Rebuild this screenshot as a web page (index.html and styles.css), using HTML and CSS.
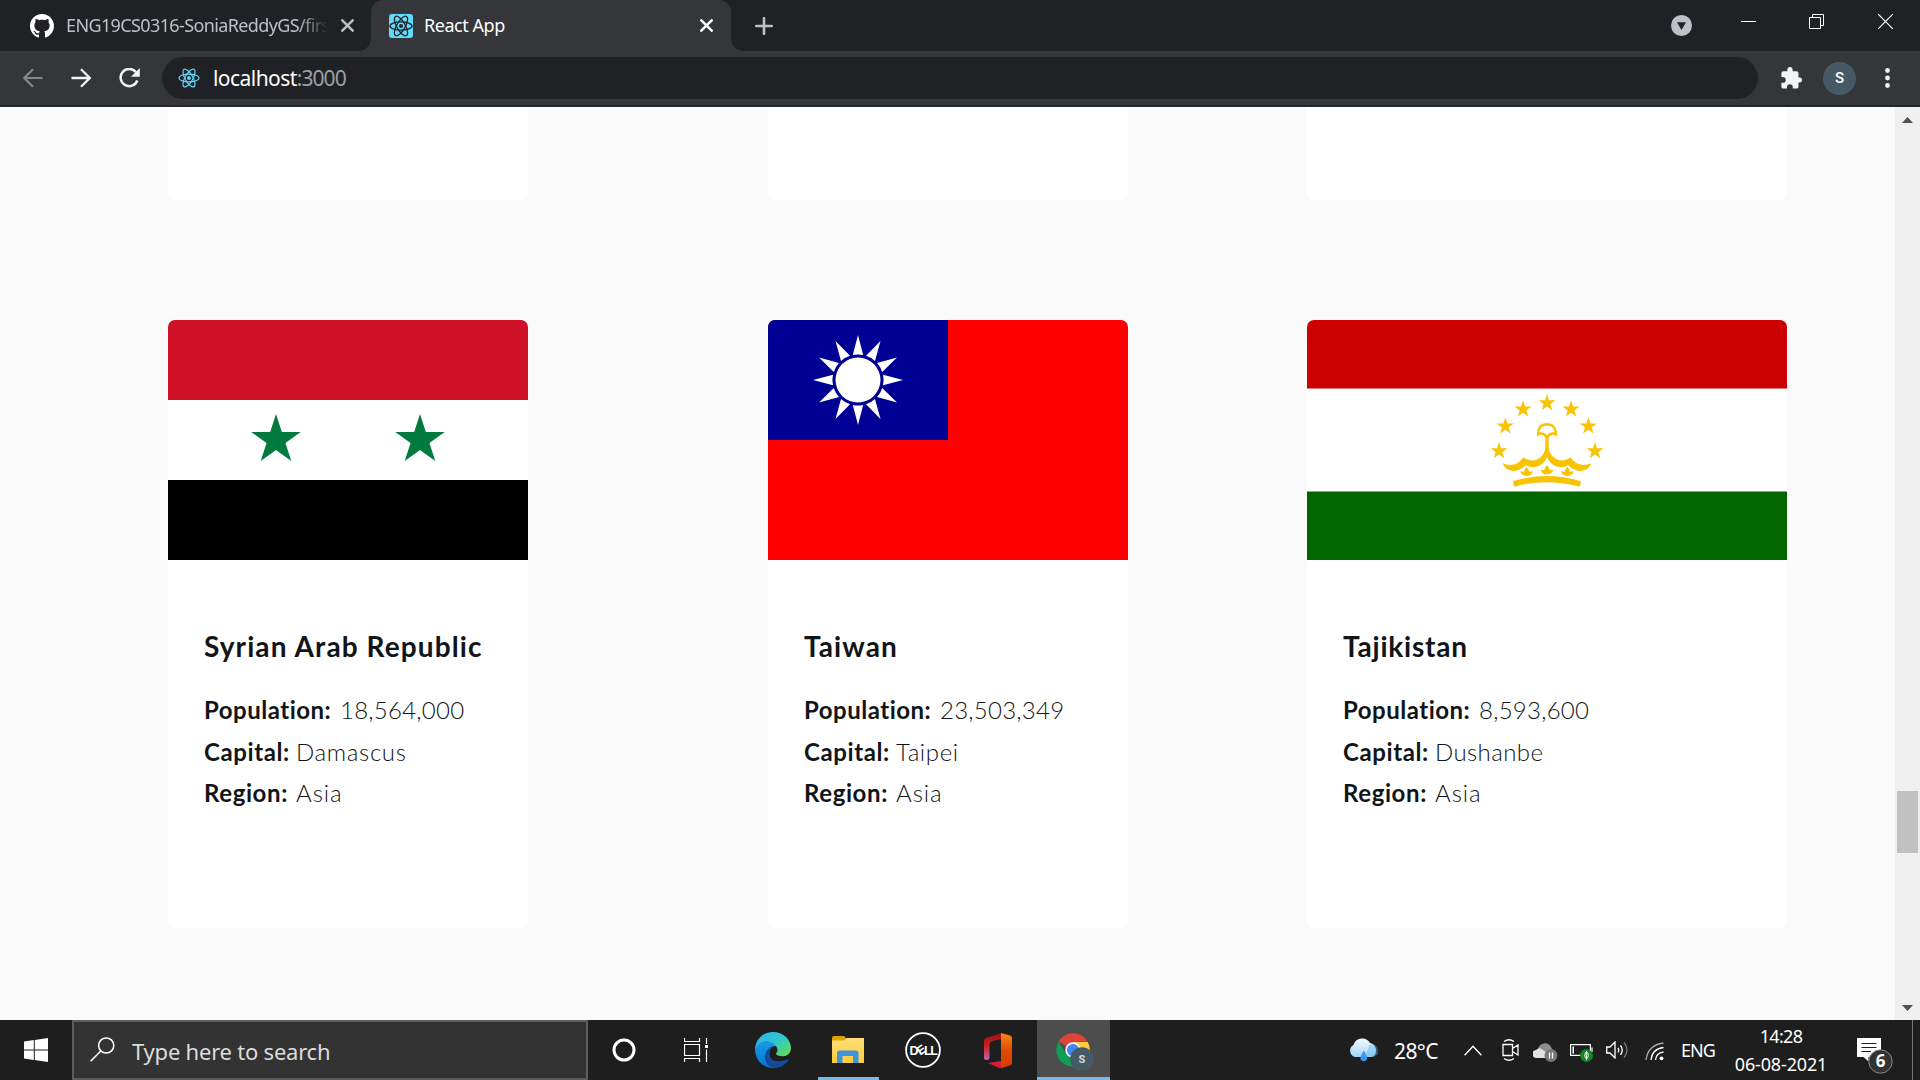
FILE: index.html
```html
<!DOCTYPE html>
<html lang="en">
<head>
<meta charset="utf-8">
<title>React App</title>
<link rel="stylesheet" href="styles.css">
</head>
<body>
<svg class="defs" aria-hidden="true">
  <defs>
    <symbol id="react" viewBox="0 0 24 24"><g fill="none" stroke="currentColor" stroke-width="1.3"><ellipse cx="12" cy="12" rx="11" ry="4.2"/><ellipse cx="12" cy="12" rx="11" ry="4.2" transform="rotate(60 12 12)"/><ellipse cx="12" cy="12" rx="11" ry="4.2" transform="rotate(120 12 12)"/></g><circle cx="12" cy="12" r="2.1" fill="currentColor"/></symbol>
    <symbol id="x" viewBox="0 0 12 12"><path d="M1.2 1.2 10.8 10.8M10.8 1.2 1.2 10.8" stroke="currentColor" stroke-width="2.3" stroke-linecap="round"/></symbol>
    <path id="star" d="M0-1 .2245-.309H.951L.363.118.588.809 0 .382-.588.809-.363.118-.951-.309H-.2245Z"/>
    <path id="ray" d="M0-45 5.200-25Q0-26.2-5.200-25Z"/>
    <path id="leaf" d="M-19-1Q-10-1-8 1-7-8 0-15 7-8 8 1 10-1 19-1 15 13 0 13-15 13-19-1Z"/>
    <linearGradient id="edgeTop" x1="0" y1="0" x2="1" y2="1"><stop offset="0" stop-color="#2fb4f0"/><stop offset=".5" stop-color="#2fc6cf"/><stop offset="1" stop-color="#6be03c"/></linearGradient>
    <linearGradient id="edgeLow" x1="0" y1="0" x2="0" y2="1"><stop offset="0" stop-color="#1b9de2"/><stop offset="1" stop-color="#0672cf"/></linearGradient>
    <linearGradient id="cloud" x1="0" y1="0" x2="0" y2="1"><stop offset="0" stop-color="#f2faff"/><stop offset="1" stop-color="#a5d5f5"/></linearGradient>
    <linearGradient id="officeR" x1="0" y1="0" x2="0" y2="1"><stop offset="0" stop-color="#f58a10"/><stop offset=".5" stop-color="#e04a05"/><stop offset="1" stop-color="#d43c00"/></linearGradient>
    <linearGradient id="officeL" x1="0" y1="0" x2="0" y2="1"><stop offset="0" stop-color="#9a0f10"/><stop offset=".5" stop-color="#cf2222"/><stop offset="1" stop-color="#b965b5"/></linearGradient>
    <linearGradient id="folder" x1="0" y1="0" x2="0" y2="1"><stop offset="0" stop-color="#ffdf78"/><stop offset="1" stop-color="#ffcb3d"/></linearGradient>
  </defs>
</svg>

<header class="tabs">
  <div class="tab tab-idle">
    <svg class="github" viewBox="0 0 16 16"><path fill="#fff" d="M8 0C3.58 0 0 3.58 0 8c0 3.54 2.29 6.53 5.47 7.59.4.07.55-.17.55-.38 0-.19-.01-.82-.01-1.49-2.01.37-2.53-.49-2.69-.94-.09-.23-.48-.94-.82-1.13-.28-.15-.68-.52-.01-.53.63-.01 1.08.58 1.23.82.72 1.21 1.87.87 2.33.66.07-.52.28-.87.51-1.07-1.78-.2-3.64-.89-3.64-3.95 0-.87.31-1.59.82-2.15-.08-.2-.36-1.02.08-2.12 0 0 .67-.21 2.2.82.64-.18 1.32-.27 2-.27s1.36.09 2 .27c1.53-1.04 2.2-.82 2.2-.82.44 1.1.16 1.92.08 2.12.51.56.82 1.27.82 2.15 0 3.07-1.87 3.75-3.65 3.95.29.25.54.73.54 1.48 0 1.07-.01 1.93-.01 2.2 0 .21.15.46.55.38A8.01 8.01 0 0 0 16 8c0-4.42-3.58-8-8-8z"/></svg>
    <span class="tab-title idle-title">ENG19CS0316-SoniaReddyGS/firs</span>
    <svg class="tab-x"><use href="#x"/></svg>
  </div>
  <div class="tab tab-active">
    <span class="favicon"><svg><use href="#react"/></svg></span>
    <span class="tab-title active-title">React App</span>
    <svg class="tab-x"><use href="#x"/></svg>
  </div>
  <svg class="plus" viewBox="0 0 18 18"><path d="M9 1.2V16.8M1.2 9H16.8" stroke="#bdc1c6" stroke-width="2.6" stroke-linecap="round"/></svg>
  <div class="window-buttons">
    <svg class="tab-search" viewBox="0 0 21 21"><circle cx="10.5" cy="10.5" r="10.5" fill="#bdc1c6"/><path d="M6 7.2H15L10.500 15Z" fill="#202124"/></svg>
    <svg class="win-min" viewBox="0 0 15 15"><path d="M0 7.500H15" stroke="#fff"/></svg>
    <svg class="win-max" viewBox="0 0 15 15"><path d="M.5 3.500H11.500V14.500H.5ZM3.500 3V.5H14.500V11.500H12" fill="none" stroke="#fff"/></svg>
    <svg class="win-close" viewBox="0 0 15 15"><path d="M0 0 15 15M15 0 0 15" stroke="#fff" stroke-width="1.2"/></svg>
  </div>
</header>

<nav class="toolbar">
  <svg class="nav-back" viewBox="0 0 20 20"><path d="M19.500 10H1.500M10 1.200 1.200 10 10 18.800" fill="none" stroke="#87898c" stroke-width="2.1"/></svg>
  <svg class="nav-fwd" viewBox="0 0 20 20"><path d="M.5 10H18.500M10 1.200 18.800 10 10 18.800" fill="none" stroke="#f1f3f4" stroke-width="2.300"/></svg>
  <svg class="nav-reload" viewBox="0 0 21 20"><path d="M17 4.200A8.600 8.600 0 1 0 18.300 12.500" fill="none" stroke="#f1f3f4" stroke-width="2.500"/><path d="M20.800 0V8.700H12Z" fill="#f1f3f4"/></svg>
  <div class="omnibox">
    <svg><use href="#react"/></svg>
    <span class="url">localhost<span class="port">:3000</span></span>
  </div>
  <svg class="puzzle" viewBox="0 0 22 22"><path fill="#f1f3f4" d="M19 10.500H17.500V6.300Q17.500 4.300 15.500 4.300H11.600V2.700A2.600 2.600 0 0 0 6.400 2.700V4.300H2.300Q.4 4.300.4 6.200V10H1.800A2.900 2.900 0 0 1 1.800 15.800H.4V19.700Q.4 21.600 2.300 21.600H6V20.200A2.900 2.900 0 0 1 11.800 20.200V21.600H15.600Q17.500 21.600 17.500 19.700V15.600H19A2.600 2.600 0 0 0 19 10.500Z"/></svg>
  <span class="avatar">S</span>
  <svg class="dots" viewBox="0 0 5 20"><g fill="#f1f3f4"><circle cx="2.500" cy="2.500" r="2.400"/><circle cx="2.500" cy="10" r="2.400"/><circle cx="2.500" cy="17.500" r="2.400"/></g></svg>
</nav>

<div class="viewport">
  <main class="countries">
    <article class="card card-cut"></article>
    <article class="card card-cut"></article>
    <article class="card card-cut card-wide"></article>

    <article class="card">
      <svg class="flag" viewBox="0 0 360 240"><path fill="#ce1126" d="M0 0H360V80H0Z"/><path fill="#fff" d="M0 80H360V160H0Z"/><path d="M0 160H360V240H0Z"/><g fill="#007a3d"><use href="#star" transform="translate(108 120) scale(26)"/><use href="#star" transform="translate(252 120) scale(26)"/></g></svg>
      <div class="info">
        <h2 class="t-syria">Syrian Arab Republic</h2>
        <p><b class="k-pop">Population:</b><span class="v-num">18,564,000</span></p>
        <p><b class="k-cap">Capital:</b><span class="v-damascus">Damascus</span></p>
        <p><b class="k-reg">Region:</b><span class="v-asia">Asia</span></p>
      </div>
    </article>

    <article class="card">
      <svg class="flag" viewBox="0 0 360 240"><path fill="#f00" d="M0 0H360V240H0Z"/><path fill="#000095" d="M0 0H180V120H0Z"/><g transform="translate(90 60)" fill="#fff"><circle r="22.500"/><use href="#ray"/><use href="#ray" transform="rotate(30)"/><use href="#ray" transform="rotate(60)"/><use href="#ray" transform="rotate(90)"/><use href="#ray" transform="rotate(120)"/><use href="#ray" transform="rotate(150)"/><use href="#ray" transform="rotate(180)"/><use href="#ray" transform="rotate(210)"/><use href="#ray" transform="rotate(240)"/><use href="#ray" transform="rotate(270)"/><use href="#ray" transform="rotate(300)"/><use href="#ray" transform="rotate(330)"/></g></svg>
      <div class="info">
        <h2 class="t-taiwan">Taiwan</h2>
        <p><b class="k-pop">Population:</b><span class="v-num">23,503,349</span></p>
        <p><b class="k-cap">Capital:</b><span class="v-taipei">Taipei</span></p>
        <p><b class="k-reg">Region:</b><span class="v-asia">Asia</span></p>
      </div>
    </article>

    <article class="card card-wide">
      <svg class="flag" viewBox="0 0 480 240"><path fill="#fff" d="M0 0H480V240H0Z"/><path fill="#c00" d="M0 0H480V68.570H0Z"/><path fill="#060" d="M0 171.430H480V240H0Z"/>
        <g transform="translate(153 50) scale(.33333)" fill="#f8c300">
          <use href="#star" transform="translate(261 99) scale(27)"/><use href="#star" transform="translate(189 118) scale(27)"/><use href="#star" transform="translate(333 118) scale(27)"/><use href="#star" transform="translate(136 169) scale(27)"/><use href="#star" transform="translate(385 169) scale(27)"/><use href="#star" transform="translate(117 243) scale(27)"/><use href="#star" transform="translate(405 243) scale(27)"/>
          <path d="M231 201C229 172 241 159 261 159S293 172 291 201C284 192 274 192 266 203V235C270 262 300 285 332 262C350 290 378 287 393 280C388 304 350 314 325 286C300 300 272 288 261 262C250 288 222 300 197 286C172 314 134 304 129 280C144 287 172 290 190 262C222 285 252 262 256 235V203C248 192 238 192 231 201ZM238 187C248 185 255 189 261 196C267 189 274 185 284 187C281 171 274 167 261 167S241 171 238 187Z" fill-rule="evenodd"/>
          <use href="#leaf" transform="translate(200 305)"/><use href="#leaf" transform="translate(261 300)"/><use href="#leaf" transform="translate(322 305)"/>
          <path d="M159 334Q261 302 363 334L360 350Q261 323 162 350Z"/>
        </g></svg>
      <div class="info">
        <h2 class="t-tajik">Tajikistan</h2>
        <p><b class="k-pop">Population:</b><span class="v-num">8,593,600</span></p>
        <p><b class="k-cap">Capital:</b><span class="v-dushanbe">Dushanbe</span></p>
        <p><b class="k-reg">Region:</b><span class="v-asia">Asia</span></p>
      </div>
    </article>
  </main>
  <aside class="scrollbar">
    <svg viewBox="0 0 11 6"><path d="M5.500 0 11 6H0Z" fill="#505050"/></svg>
    <div class="thumb"></div>
    <svg viewBox="0 0 11 6"><path d="M0 0H11L5.500 6Z" fill="#505050"/></svg>
  </aside>
</div>

<footer class="taskbar">
  <div class="slot"><svg width="24" height="24" viewBox="0 0 24 24"><path fill="#fff" d="M0 3.400 9.800 2V11.400H0ZM10.800 1.900 24 0V11.400H10.800ZM0 12.400H9.800V22L0 20.600ZM10.800 12.400H24V24L10.800 22.100Z"/></svg></div>
  <div class="search">
    <svg width="25" height="25" viewBox="0 0 25 25"><circle cx="16.200" cy="8.500" r="7.600" fill="none" stroke="#fff" stroke-width="1.500"/><path d="M10.800 14 .6 24.300" stroke="#fff" stroke-width="1.600"/></svg>
    <span>Type here to search</span>
  </div>
  <div class="slot"><svg width="24" height="24" viewBox="0 0 24 24"><circle cx="12" cy="12" r="10" fill="none" stroke="#fff" stroke-width="3"/></svg></div>
  <div class="slot"><svg width="24" height="24" viewBox="0 0 24 24"><path d="M.5 0V3.500H15.500V0M.5 6.500H15.500V17.500H.5ZM.5 24V20.500H15.500V24M22.500 0V6M22.500 11.500V24" fill="none" stroke="#fff" stroke-width="1.200"/><path d="M21 7H24V10H21Z" fill="#fff"/></svg></div>
  <div class="slot app app-first"><svg width="36" height="36" viewBox="0 0 36 36"><path fill="url(#edgeLow)" d="M0 17C1 7 17 5 22 14 15 13 13 20 15 26 17 32 24 35 29 32 25 35 21 36 18 36 8 36 0 28 0 17Z"/><path fill="#124b9a" d="M17 14C12 19 14 28 21 29 26 30 30 28 33 27 34 27 34 28 33 29 29 34 24 36 19 36 9 35 6 20 17 14Z"/><path fill="url(#edgeTop)" d="M0 17C1 6 9 0 18 0 29 0 36 8 36 16 36 22 31 25 26 24 21 24 20 22 22 20 24 17 20 10 12 9 6 9 2 12 0 17Z"/></svg></div>
  <div class="slot app app-open"><svg width="32" height="28" viewBox="0 0 32 28"><path fill="#e0a100" d="M0 2Q0 0 2 0H12L15 3V7H0Z"/><path fill="url(#folder)" d="M0 4.500H12L15 2H32V27H0Z"/><path fill="#3c96dd" d="M5 27V17Q5 14.500 8 14.500H24Q26.500 14.500 26.500 17V27H21V20H10.500V27Z"/></svg></div>
  <div class="slot app"><svg width="36" height="36" viewBox="0 0 36 36"><circle cx="18" cy="18" r="16.900" fill="none" stroke="#fff" stroke-width="1.800"/><g class="dell"><text x="4.500" y="22.500">D</text><text x="12" y="22.300" transform="rotate(-35 16 18)">E</text><text x="19" y="22.500">L</text><text x="25.300" y="22.500">L</text></g></svg></div>
  <div class="slot app"><svg width="28" height="35" viewBox="0 0 28 35"><path fill="url(#officeL)" d="M17 0 2 5Q0 6 0 8V26Q2 28 5.500 26V11Q6 9 8 8L17 6Z"/><path fill="#d91d35" d="M4 30 17 28 28 31 19 34.500Q16 35.500 14 34.500Z"/><path fill="url(#officeR)" d="M17 0 26 2.500Q28 3 28 5V30Q28 32 26 32.500L17 35Z"/></svg></div>
  <div class="slot app app-active"><svg width="38" height="38" viewBox="0 0 38 38"><path fill="#db4437" d="M17 17 2.600 8.700A16.600 16.600 0 0 1 31.400 8.700L17 9Z"/><path fill="#ffcd40" d="M17 9H31.700A16.600 16.600 0 0 1 17 33.600L24 21Z"/><path fill="#0f9d58" d="M2.600 8.700 10 21 24 21 17 33.600A16.600 16.600 0 0 1 2.600 8.700Z"/><circle cx="17" cy="17" r="7.800" fill="#f1f1f1"/><circle cx="17" cy="17" r="6" fill="#4285f4"/><circle cx="26" cy="26" r="11.800" fill="#455a64"/><text class="badge-letter" x="26" y="30">S</text></svg></div>

  <div class="tray">
    <svg class="weather" viewBox="0 0 31 24"><path fill="url(#cloud)" d="M7 19A6.500 6.500 0 0 1 5.500 7 9 9 0 0 1 22 5 7.500 7.500 0 0 1 24 19Z"/><path fill="#5cb3f2" opacity=".4" d="M11 19Q20 17 21 7 26 5 29 9 33 18 24 19Z"/><path fill="#3b96ed" d="M15.800 12.500Q12 19 12.500 20.500A3.300 3.300 0 0 0 19 20.500Q19.500 19 15.800 12.500Z"/></svg>
    <span class="temp">28°C</span>
    <svg class="chev" viewBox="0 0 18 11"><path d="M.6 10.300 9 1.200 17.400 10.300" fill="none" stroke="#fff" stroke-width="1.400"/></svg>
    <svg class="meet" viewBox="0 0 17 22"><path d="M1 5.500H10.500V16.500H1ZM10.500 9.500 16 6V16L10.500 12.500M2 2.500Q7 -1 12 2.500M2 19.500Q7 23 12 19.500" fill="none" stroke="#fff" stroke-width="1.300"/></svg>
    <svg class="drive" viewBox="0 0 25 20"><path fill="#8d8d8d" d="M5 7A7 7 0 0 1 18 5Q20 7 19 13H6Z"/><path fill="#e2e2e2" d="M4 16A4 4 0 0 1 3 8Q7 4 11 9L18 12V16Z"/><circle cx="18" cy="13.500" r="6.500" fill="#777"/><path d="M16.500 10.500V16.500M19.500 10.500V16.500" stroke="#fff" stroke-width="1.300"/></svg>
    <svg class="battery" viewBox="0 0 24 19"><path d="M.6 1.600H20.400V12.400H.6ZM22 4.500V9" fill="none" stroke="#fff" stroke-width="1.200"/><path d="M2.500 3.500H4V10.500H2.500Z" fill="#fff"/><circle cx="16.500" cy="12.500" r="6.400" fill="#0f8a1c"/><path d="M16.500 8.500Q20 12.500 16.500 16 13 12.500 16.500 8.500ZM16.500 8.500V17" fill="none" stroke="#fff"/></svg>
    <svg class="volume" viewBox="0 0 23 18"><path d="M.7 6H4L9 1V17L4 12H.7Z" fill="none" stroke="#fff" stroke-width="1.300"/><path d="M12 7Q13.500 9 12 11.500M14.500 4.500Q18 9 14.500 14" fill="none" stroke="#fff" stroke-width="1.300"/><path d="M18 1.500Q24 9 18 16.500" fill="none" stroke="#777" stroke-width="1.300"/></svg>
    <svg class="wifi" viewBox="0 0 19 19"><g fill="none" stroke="#fff" stroke-width="1.300"><path d="M10.500 18Q11 11 18.500 10"/><path d="M6 18Q7 7 18.500 5.500"/><path d="M1 18Q3 3 18.500 1" stroke="#aaa"/></g><circle cx="16.500" cy="16.300" r="1.900" fill="#fff"/></svg>
    <span class="lang">ENG</span>
    <div class="clock"><span class="time">14:28</span><span class="date">06-08-2021</span></div>
    <svg class="notes" viewBox="0 0 36 36"><path fill="#fff" d="M0 0H24V19H11.500V23.500L6.500 19H0Z"/><path d="M4.500 5.500H19.500M4.500 9.500H19.500M4.500 13.500H14" stroke="#1e1e1e" stroke-width="1.200"/><circle cx="23.500" cy="23.500" r="11.700" fill="#333" stroke="#888"/><text x="23.500" y="29.300">6</text></svg>
    <span class="peek"></span>
  </div>
</footer>
</body>
</html>
```
FILE: styles.css
```css
* { box-sizing: border-box; }
body {
  margin: 0;
  width: 1920px;
  height: 1080px;
  overflow: hidden;
  display: flex;
  flex-direction: column;
  background: #fafafa;
  font-family: "Noto Sans", sans-serif;
}
svg { display: block; flex: none; }
.defs { width: 0; height: 0; position: absolute; }

/* Tab strip */
.tabs { height: 51px; flex: none; display: flex; align-items: flex-start; background: #202124; color: #fff; }
.tab { height: 51px; display: flex; align-items: center; }
.tab-idle { width: 371px; padding-left: 30px; color: #bdc1c6; }
.github { width: 24px; height: 24px; }
.tab-title { font-size: 18px; line-height: 24px; white-space: nowrap; letter-spacing: -0.620px; margin-top: -1px; }
.idle-title { width: 266px; margin-left: 12px; -webkit-mask-image: linear-gradient(90deg, #000 232px, transparent 262px); mask-image: linear-gradient(90deg, #000 232px, transparent 262px); }
.active-title { letter-spacing: -0.450px; }
.tab-x { width: 13px; height: 13px; margin-left: 9px; }
.tab-active { position: relative; width: 360px; padding: 0 18px; background: #35363a; border-radius: 12px 12px 0 0; }
.tab-active::before, .tab-active::after { content: ""; position: absolute; bottom: 0; width: 12px; height: 12px; }
.tab-active::before { left: -12px; background: radial-gradient(circle at 0 0, #202124 11.500px, #35363a 12px); }
.tab-active::after { right: -12px; background: radial-gradient(circle at 100% 0, #202124 11.500px, #35363a 12px); }
.tab-active .tab-x { margin-left: auto; }
.favicon { width: 24px; height: 24px; border-radius: 3px; background: #61dafb; color: #20232a; margin-right: 11px; }
.favicon svg { width: 24px; height: 24px; }
.plus { width: 18px; height: 18px; margin: 16.500px 0 0 23.500px; }
.window-buttons { margin-left: auto; display: flex; align-items: flex-start; padding: 14px 27px 0 0; }
.window-buttons svg { width: 15px; height: 15px; }
.window-buttons .tab-search { width: 21px; height: 21px; margin-top: 1px; }
.win-min { margin-left: 49px; }
.win-max { margin-left: 53px; }
.win-close { margin-left: 54px; }

/* Address bar */
.toolbar { height: 56px; flex: none; display: flex; align-items: center; background: #35363a; border-bottom: 2px solid #26272a; padding-left: 23px; }
.nav-back, .nav-fwd { width: 20px; height: 20px; }
.nav-fwd { margin-left: 28px; }
.nav-reload { width: 21px; height: 20px; margin-left: 28px; }
.omnibox { width: 1596px; height: 42px; margin-left: 22px; padding-left: 16px; display: flex; align-items: center; background: #202124; border-radius: 21px; color: #61dafb; }
.omnibox svg { width: 22px; height: 22px; }
.url { margin-left: 13px; font-size: 21px; letter-spacing: -0.550px; color: #fff; }
.port { color: #9aa0a6; letter-spacing: -0.950px; }
.puzzle { width: 22px; height: 22px; margin: -1px 0 0 23px; }
.avatar { width: 33px; height: 33px; margin-left: 20px; border-radius: 50%; background: #455a64; color: #fff; font: 500 15px/33px Roboto, sans-serif; text-align: center; }
.dots { width: 5px; height: 20px; margin-left: 28.500px; }

/* Page */
.viewport { flex: 1; display: flex; background: #fafafa; overflow: hidden; }
.countries { flex: 1; display: grid; grid-template-columns: 600px 539px 480px; grid-template-rows: 93px 608px; row-gap: 120px; padding-left: 168px; }
.card { width: 360px; background: #fff; border-radius: 7px; overflow: hidden; color: #111517; font-family: Lato, sans-serif; font-variant-ligatures: none; }
.card-wide { width: 480px; }
.card-cut { border-radius: 0 0 7px 7px; }
.flag { width: 100%; height: 240px; }
.info { padding: 68px 36px 0; }
.info h2 { margin: 0 0 25px; font-size: 28px; line-height: 36px; font-weight: 700; white-space: nowrap; }
.info p { margin: 0; display: flex; font-size: 24px; line-height: 41.600px; font-weight: 300; white-space: nowrap; }
.info b { font-weight: 700; letter-spacing: 0.600px; }
.k-pop { width: 136px; }
.k-cap, .k-reg { width: 92px; }
.info .k-pop { letter-spacing: 0.500px; }
.t-syria, .t-taiwan { letter-spacing: 1.100px; }
.t-tajik { letter-spacing: 0.800px; }
.v-num { letter-spacing: 0.250px; }
.v-damascus { letter-spacing: 0.650px; }
.v-taipei { letter-spacing: 0.600px; }
.v-dushanbe { letter-spacing: 0.400px; }
.v-asia { letter-spacing: 0.900px; }

.scrollbar { width: 25px; flex: none; background: #f0f0f0; display: flex; flex-direction: column; align-items: center; padding: 10px 0 9px; }
.scrollbar svg { width: 11px; height: 6px; }
.thumb { width: 21px; height: 62px; margin: 668px 0 auto; background: #c1c1c1; }

/* Taskbar */
.taskbar { height: 60px; flex: none; display: flex; background: #1e1e1e; color: #fff; }
.slot { width: 72px; height: 60px; display: flex; align-items: center; justify-content: center; }
.search { width: 516px; height: 60px; display: flex; align-items: center; padding-left: 16px; background: #333; border: 2px solid #5c5c5c; font-size: 22px; letter-spacing: -0.220px; color: #dcdcdc; }
.search svg { margin-top: -2px; }
.search span { margin-left: 17px; margin-top: 2px; }
.app { width: 75px; padding-right: 2px; }
.app-first { margin-left: 4px; }
.app-open { background: linear-gradient(#76b9ed, #76b9ed) 7px 57px / 61px 3px no-repeat; }
.app-active { width: 73px; margin-left: 1px; padding: 3px 0 0 3px; background: linear-gradient(#76b9ed, #76b9ed) 0 57px / 73px 3px no-repeat #4d4d4d; }
.dell { fill: #fff; font: 700 12.500px "Liberation Sans", sans-serif; }
.badge-letter { fill: #d5d9db; font: 700 11px Roboto, sans-serif; text-anchor: middle; }
.tray { margin-left: auto; display: flex; align-items: center; }
.weather { width: 31px; height: 24px; }
.temp { width: 44px; margin-left: 15px; font-size: 21px; letter-spacing: -0.600px; margin-top: 2px; }
.chev { width: 18px; height: 11px; margin-left: 26px; }
.meet { width: 17px; height: 22px; margin-left: 20px; }
.drive { width: 25px; height: 20px; margin-left: 14px; margin-top: 4px; }
.battery { width: 24px; height: 19px; margin-left: 12px; margin-top: 5px; }
.volume { width: 23px; height: 18px; margin-left: 12px; }
.wifi { width: 19px; height: 19px; margin-left: 16px; margin-top: 2px; }
.lang { width: 34px; margin-left: 17px; font-size: 18px; letter-spacing: -1px; }
.clock { width: 94px; margin-left: 19px; display: flex; flex-direction: column; align-items: center; font-size: 18px; line-height: 28px; letter-spacing: -0.700px; white-space: nowrap; }
.date { letter-spacing: -0.150px; }
.notes { width: 36px; height: 36px; margin-left: 29px; margin-top: 11px; }
.notes text { fill: #fff; font: 700 17px "Noto Sans", sans-serif; text-anchor: middle; }
.peek { width: 1.500px; height: 60px; margin-left: 18.500px; margin-right: 7px; background: #777; }
```
